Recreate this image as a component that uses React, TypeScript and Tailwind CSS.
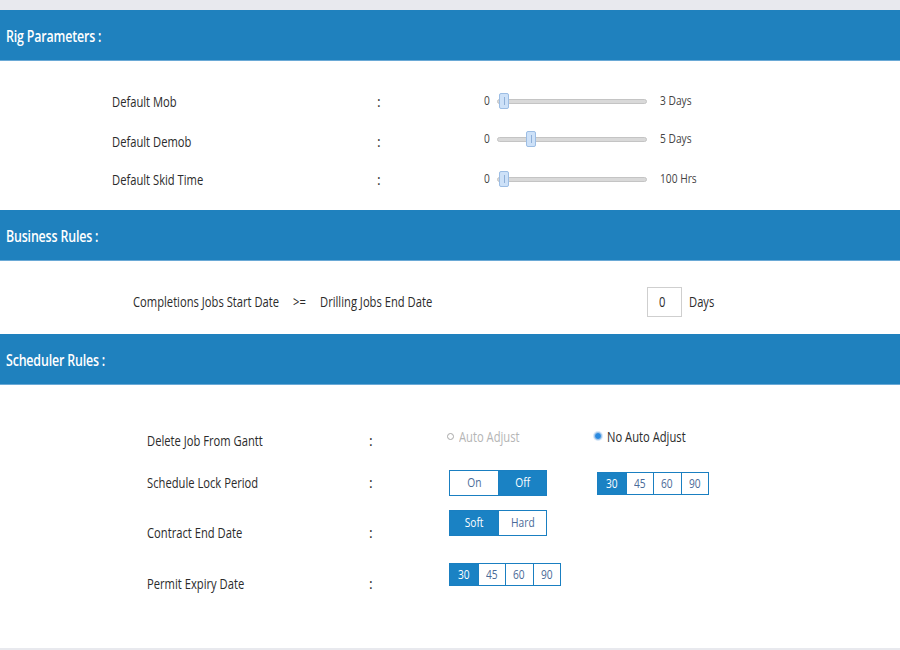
import React from "react";

const font = { fontFamily: '"Open Sans", "Noto Sans", sans-serif' };

function T({ children, className = "" }: { children: React.ReactNode; className?: string }) {
  return <span className={`inline-block whitespace-nowrap scale-x-80 origin-left ${className}`}>{children}</span>;
}

function S({ children, className = "" }: { children: React.ReactNode; className?: string }) {
  return <span className={`inline-block whitespace-nowrap scale-x-85 origin-left ${className}`}>{children}</span>;
}

function Header({ title }: { title: string }) {
  return (
    <div className="h-[51px] bg-[#1f81be] border-b border-[#6aa9d6] flex items-center pl-[6px] pt-[3px]">
      <T className="text-white text-[15.5px] font-semibold tracking-[-0.2px]">{title}</T>
    </div>
  );
}

function Slider({ pos, value }: { pos: number; value: string }) {
  return (
    <div className="flex items-center">
      <S className="w-[10px] text-[12px] text-[#444]">0</S>
      <div className="relative w-[150px] h-[5px] rounded-full bg-[#d9d9d9] border border-[#c4c4c4] ml-[3px]">
        <div
          className="absolute top-[-7px] w-[10px] h-[16px] rounded-[2px] bg-[#cde1f8] border border-[#9cbde4] flex items-center justify-center"
          style={{ left: pos }}
        >
          <div className="w-px h-[8px] bg-[#8fb0d8]" />
        </div>
      </div>
      <S className="ml-[13px] text-[12px] text-[#444]">{value}</S>
    </div>
  );
}

function RigRow({ label, h, pos, value, sliderShift = 0 }: { label: string; h: number; pos: number; value: string; sliderShift?: number }) {
  return (
    <div className="flex items-center pl-[112px]" style={{ height: h }}>
      <div className="w-[265px] text-[14px] text-[#2b2b2b]">
        <T>{label}</T>
      </div>
      <div className="w-[107px] text-[14px] text-[#333]">:</div>
      <div style={{ marginTop: sliderShift }}>
        <Slider pos={pos} value={value} />
      </div>
    </div>
  );
}

function Seg({ items, active, cellW, h }: { items: string[]; active: number; cellW: number; h: number }) {
  return (
    <div className="flex border border-[#1a7fc1]" style={{ height: h }}>
      {items.map((it, i) => (
        <div
          key={it}
          className={`flex items-center justify-center text-[12px] ${i > 0 ? "border-l border-[#1a7fc1]" : ""} ${
            i === active ? "bg-[#1a82c4] text-white" : "bg-white text-[#4a6a98]"
          }`}
          style={{ width: cellW }}
        >
          <span className="inline-block scale-x-85">{it}</span>
        </div>
      ))}
    </div>
  );
}

export default function App() {
  return (
    <div className="w-[900px] h-[650px] bg-white flex flex-col overflow-hidden" style={font}>
      <div className="h-[10px] bg-[#e8e9ee]" />
      <Header title="Rig Parameters :" />
      <div className="h-[149px] pt-[20px]">
        <RigRow label="Default Mob" h={40} pos={1} value="3 Days" />
        <RigRow label="Default Demob" h={40} pos={28} value="5 Days" sliderShift={-4} />
        <RigRow label="Default Skid Time" h={36} pos={1} value="100 Hrs" />
      </div>
      <Header title="Business Rules :" />
      <div className="h-[73px] pt-[8px] flex items-center pl-[133px] text-[14px] text-[#2b2b2b]">
        <div className="w-[160px]"><T>Completions Jobs Start Date</T></div>
        <div className="w-[27px]"><T>&gt;=</T></div>
        <div className="w-[327px]"><T>Drilling Jobs End Date</T></div>
        <div className="w-[35px] h-[30px] border border-[#cfcfcf] flex items-center pl-[11px]"><T>0</T></div>
        <T className="ml-[7px]">Days</T>
      </div>
      <Header title="Scheduler Rules :" />
      <div className="flex-1 pt-[40px] text-[14px] text-[#2b2b2b]">
        <div className="flex items-start pl-[147px] h-[35px]">
          <div className="w-[222px] mt-[6px] leading-[20px]"><T>Delete Job From Gantt</T></div>
          <div className="w-[78px] mt-[6px] leading-[20px]">:</div>
          <div className="w-[147px] mt-[1px] h-[20px] flex items-center gap-[5px] text-[#b5b5b5]">
            <span className="w-[7px] h-[7px] rounded-full border border-[#a8a8a8]" />
            <T>Auto Adjust</T>
          </div>
          <div className="mt-[1px] h-[20px] flex items-center gap-[5px]">
            <span className="w-[8px] h-[8px] rounded-full bg-[#2a8ae0] border border-[#a9c9ec] shadow-[0_0_0_1px_#d8e8f8]" />
            <T>No Auto Adjust</T>
          </div>
        </div>
        <div className="flex items-start pl-[147px] h-[45px]">
          <div className="w-[222px] mt-[13px] leading-[20px]"><T>Schedule Lock Period</T></div>
          <div className="w-[80px] mt-[13px] leading-[20px]">:</div>
          <div className="mt-[10px]">
            <Seg items={["On", "Off"]} active={1} cellW={48} h={26} />
          </div>
          <div className="mt-[12px] ml-[50px]">
            <Seg items={["30", "45", "60", "90"]} active={0} cellW={27.5} h={23} />
          </div>
        </div>
        <div className="flex items-start pl-[147px] h-[50px]">
          <div className="w-[222px] mt-[18px] leading-[20px]"><T>Contract End Date</T></div>
          <div className="w-[80px] mt-[18px] leading-[20px]">:</div>
          <div className="mt-[5px]">
            <Seg items={["Soft", "Hard"]} active={0} cellW={48} h={26} />
          </div>
        </div>
        <div className="flex items-start pl-[147px] h-[45px]">
          <div className="w-[222px] mt-[19px] leading-[20px]"><T>Permit Expiry Date</T></div>
          <div className="w-[80px] mt-[19px] leading-[20px]">:</div>
          <div className="mt-[8px]">
            <Seg items={["30", "45", "60", "90"]} active={0} cellW={27.5} h={23} />
          </div>
        </div>
      </div>
      <div className="h-[2px] bg-[#e8e9ee]" />
    </div>
  );
}
